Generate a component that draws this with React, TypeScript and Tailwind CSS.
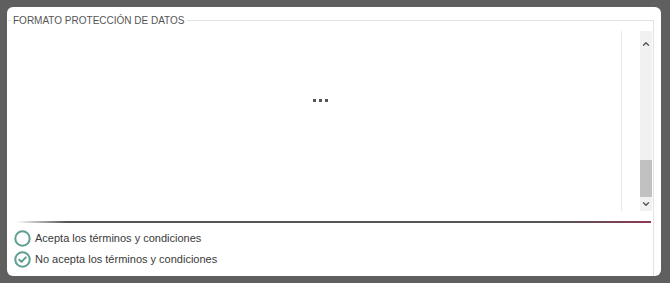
import { ChevronDown, ChevronUp } from 'lucide-react';

function Radio({ checked }: { checked?: boolean }) {
  return (
    <svg width="17" height="17" viewBox="0 0 17 17" className="shrink-0">
      <circle cx="8.5" cy="8.5" r="7.2" fill="none" stroke="#5f9e92" strokeWidth="2" />
      {checked && (
        <path d="M5.2 8.7 7.5 10.9 11.8 6.4" fill="none" stroke="#5f9e92" strokeWidth="2" strokeLinecap="round" strokeLinejoin="round" />
      )}
    </svg>
  );
}

export default function App() {
  return (
    <div className="flex h-[283px] w-[670px] bg-[#5f5f5f] pb-[7px] pl-[7px] pr-[9px] pt-[7px] font-['Liberation_Sans',Arial,sans-serif]">
      <div className="flex flex-1 flex-col rounded-[6px] bg-white pl-px pr-[7px] pt-[7px]">
        <fieldset className="flex flex-1 flex-col border-r border-t border-[#e2e2e2]">
          <legend className="ml-[3px] px-[2px] text-[10px] leading-[13px] text-[#555]">FORMATO PROTECCIÓN DE DATOS</legend>
          <div className="mt-[4px] flex h-[180px]">
            <div className="flex flex-1 justify-center border-r border-[#e8e8e8] pl-[12px] pt-[68px]">
              <div className="flex h-[3px] gap-[3px]">
                <span className="h-[3px] w-[3px] bg-[#555]" />
                <span className="h-[3px] w-[3px] bg-[#555]" />
                <span className="h-[3px] w-[3px] bg-[#555]" />
              </div>
            </div>
            <div className="ml-[18px] mr-px flex w-[12px] flex-col items-center bg-[#f1f1f1]">
              <ChevronUp className="mt-[8px] h-[10px] w-[10px] text-[#505050]" strokeWidth={3} />
              <div className="mt-[111px] h-[37px] w-full bg-[#c1c1c1]" />
              <ChevronDown className="mt-[2px] h-[10px] w-[10px] text-[#505050]" strokeWidth={3} />
            </div>
          </div>
          <div className="ml-[8px] mr-[2px] mt-[10px] h-[2px] bg-[linear-gradient(to_right,rgba(80,80,80,0),#555_8%,#555_85%,#8c3a50)]" />
          <div className="flex flex-col gap-[4px] pl-[6px] pt-[7px] text-[11px] text-[#3a3a3a]">
            <label className="flex items-center gap-[4px]">
              <Radio />
              <span>Acepta los términos y condiciones</span>
            </label>
            <label className="flex items-center gap-[4px]">
              <Radio checked />
              <span>No acepta los términos y condiciones</span>
            </label>
          </div>
        </fieldset>
      </div>
    </div>
  );
}
